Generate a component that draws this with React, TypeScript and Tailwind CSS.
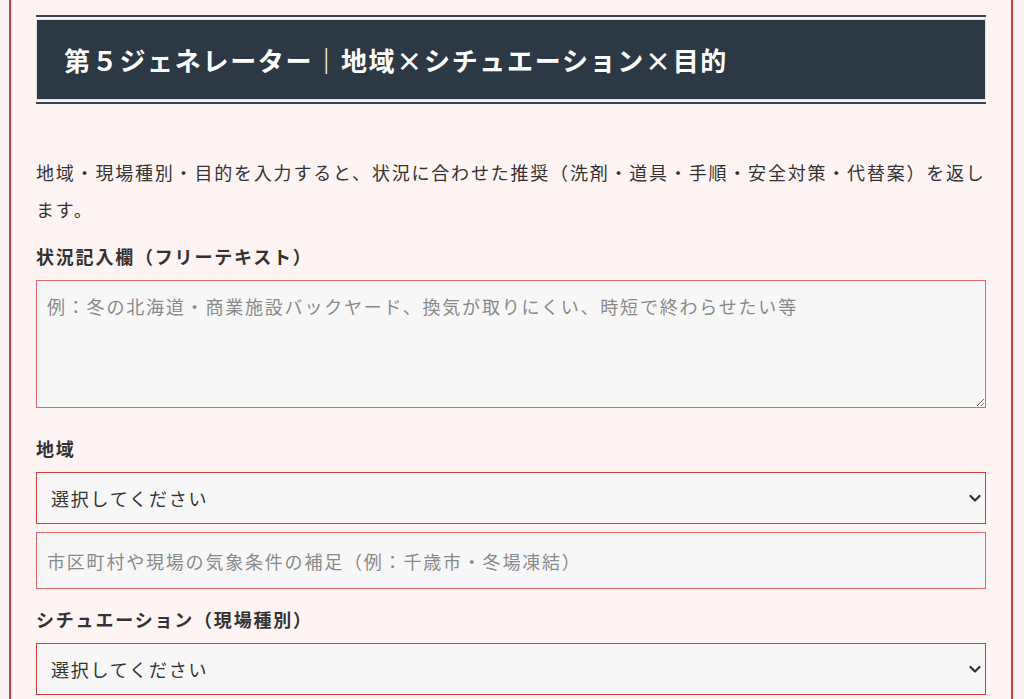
import React from 'react';

const font = { fontFamily: '"Noto Sans CJK JP", "Noto Sans", sans-serif' };

function Chevron() {
  return (
    <svg
      aria-hidden="true"
      className="pointer-events-none absolute right-[5px] top-1/2 h-[10px] w-[12px] -translate-y-1/2"
      viewBox="0 0 12 10"
      fill="none"
    >
      <path d="M1.5 3l4.5 4.5L10.5 3" stroke="#333" strokeWidth="2.2" strokeLinecap="round" strokeLinejoin="round" />
    </svg>
  );
}

function SelectBox() {
  return (
    <div className="relative">
      <select
        defaultValue=""
        className="block h-[52px] w-full appearance-none border border-[#d93a3a] bg-[#f7f7f7] pl-[14px] text-[18px] tracking-[0.1em] text-[#333] outline-none"
      >
        <option value="">選択してください</option>
      </select>
      <Chevron />
    </div>
  );
}

export default function App() {
  return (
    <div className="min-h-[699px] bg-[#f5f5f5] text-[#333]" style={font}>
      <div className="ml-[9px] mr-[11px] min-h-[699px] border-x-2 border-[#d8363e] bg-[#fff4f4] px-[25px] pt-[15px] pb-[20px]">
        {/* 見出し */}
        <div className="border-y-2 border-[#3b4350] py-[2px]">
          <h2 className="flex h-[81px] items-center border border-[#dfe1e4] bg-[#2d3845] pl-[27px] text-[26px] font-bold tracking-[0.065em] text-white">
            第５ジェネレーター｜地域×シチュエーション×目的
          </h2>
        </div>

        <p className="mt-[50px] text-[18px] leading-[37px] tracking-[0.1em]">
          地域・現場種別・目的を入力すると、状況に合わせた推奨（洗剤・道具・手順・安全対策・代替案）を返します。
        </p>

        <label className="mt-[10px] mb-[5px] block text-[18px] font-bold leading-[37px] tracking-[0.1em]">
          状況記入欄（フリーテキスト）
        </label>
        <textarea
          className="block h-[128px] w-full border border-[#e06868] bg-[#f7f7f7] px-[10px] py-[12px] text-[18px] leading-[26px] tracking-[0.1em] text-[#333] outline-none placeholder:text-[#8a8a8a]"
          placeholder="例：冬の北海道・商業施設バックヤード、換気が取りにくい、時短で終わらせたい等"
        />

        <label className="mt-[22px] mb-[5px] block text-[18px] font-bold leading-[37px] tracking-[0.1em]">
          地域
        </label>
        <SelectBox />
        <input
          className="mt-[8px] block h-[57px] w-full border border-[#e06868] bg-[#f7f7f7] px-[10px] text-[18px] tracking-[0.1em] text-[#333] outline-none placeholder:text-[#8a8a8a]"
          placeholder="市区町村や現場の気象条件の補足（例：千歳市・冬場凍結）"
        />

        <label className="mt-[12px] mb-[5px] block text-[18px] font-bold leading-[37px] tracking-[0.1em]">
          シチュエーション（現場種別）
        </label>
        <SelectBox />
      </div>
    </div>
  );
}
